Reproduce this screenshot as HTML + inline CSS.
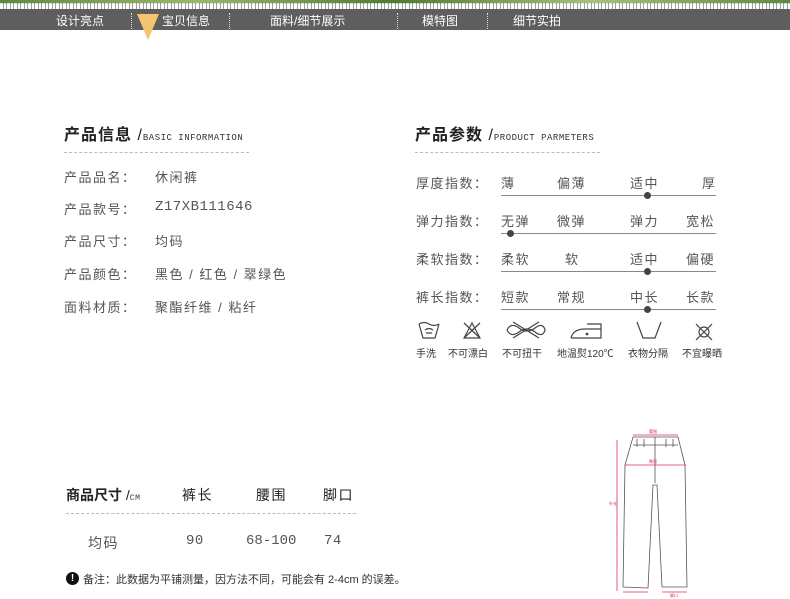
<!DOCTYPE html>
<html><head><meta charset="utf-8"><style>
*{margin:0;padding:0;box-sizing:border-box}
body{width:790px;height:599px;background:#fff;position:relative;overflow:hidden;font-family:"Liberation Sans","Noto Sans CJK SC",sans-serif;color:#444}
.a{position:absolute;white-space:nowrap}
.t{font-size:13px;color:#555;letter-spacing:1.5px}
.h{font-size:16px;color:#222;font-weight:bold;letter-spacing:1px}
.e{font-size:9px;color:#333;font-family:"Liberation Mono",monospace;letter-spacing:0.5px;font-weight:normal}
.dl{position:absolute;height:0;border-top:1px dashed #bbb}
.nav{color:#fff;font-size:12px}
.ln{position:absolute;height:1px;background:#888}
.dot{position:absolute;width:7px;height:7px;border-radius:50%;background:#444}
.ic{font-size:10px;color:#333}
.m{font-family:"Liberation Mono",monospace;letter-spacing:0.5px}
</style></head><body>
<div class="a" style="left:0;top:0;width:790px;height:4px;background:linear-gradient(90deg,#5d8a3a,#9ab86a,#4f7a32,#a8c07a,#5d8a3a)"></div>
<div class="a" style="left:0;top:3px;width:790px;height:6px;background:repeating-linear-gradient(90deg,#fff 0 3px,#888 3px 4px,#fff 4px 6px,#888 6px 7px);opacity:.8"></div>
<div class="a" style="left:0;top:9px;width:790px;height:21px;background:#5e5e5e"></div>
<div class="a nav" style="left:56px;top:12px">设计亮点</div>
<div class="a nav" style="left:162px;top:12px">宝贝信息</div>
<div class="a nav" style="left:270px;top:12px">面料/细节展示</div>
<div class="a nav" style="left:422px;top:12px">模特图</div>
<div class="a nav" style="left:513px;top:12px">细节实拍</div>
<div class="a" style="left:131px;top:13px;height:16px;border-left:1px dotted #ddd"></div>
<div class="a" style="left:229px;top:13px;height:16px;border-left:1px dotted #ddd"></div>
<div class="a" style="left:397px;top:13px;height:16px;border-left:1px dotted #ddd"></div>
<div class="a" style="left:487px;top:13px;height:16px;border-left:1px dotted #ddd"></div>
<div class="a" style="left:137px;top:14px;width:0;height:0;border-left:11px solid transparent;border-right:11px solid transparent;border-top:26px solid #f5c46e"></div>

<div class="a h" style="left:64px;top:121px">产品信息 <span style="font-weight:normal">/</span><span class="e">BASIC INFORMATION</span></div>
<div class="dl" style="left:64px;top:152px;width:185px"></div>
<div class="a t" style="left:64px;top:167px">产品品名：</div><div class="a t" style="left:155px;top:167px">休闲裤</div>
<div class="a t" style="left:64px;top:199px">产品款号：</div><div class="a t m" style="left:155px;top:199px;font-size:14px">Z17XB111646</div>
<div class="a t" style="left:64px;top:231px">产品尺寸：</div><div class="a t" style="left:155px;top:231px">均码</div>
<div class="a t" style="left:64px;top:264px">产品颜色：</div><div class="a t" style="left:155px;top:264px">黑色 / 红色 / 翠绿色</div>
<div class="a t" style="left:64px;top:297px">面料材质：</div><div class="a t" style="left:155px;top:297px">聚酯纤维 / 粘纤</div>

<div class="a h" style="left:415px;top:121px">产品参数 <span style="font-weight:normal">/</span><span class="e">PRODUCT PARMETERS</span></div>
<div class="dl" style="left:415px;top:152px;width:185px"></div>

<div class="a t" style="left:416px;top:173px">厚度指数：</div>
<div class="a t" style="left:501px;top:173px">薄</div><div class="a t" style="left:557px;top:173px">偏薄</div><div class="a t" style="left:630px;top:173px">适中</div><div class="a t" style="left:702px;top:173px">厚</div>
<div class="ln" style="left:501px;top:195px;width:215px"></div><div class="dot" style="left:644px;top:192px"></div>

<div class="a t" style="left:416px;top:211px">弹力指数：</div>
<div class="a t" style="left:501px;top:211px">无弹</div><div class="a t" style="left:557px;top:211px">微弹</div><div class="a t" style="left:630px;top:211px">弹力</div><div class="a t" style="left:686px;top:211px">宽松</div>
<div class="ln" style="left:501px;top:233px;width:215px"></div><div class="dot" style="left:507px;top:230px"></div>

<div class="a t" style="left:416px;top:249px">柔软指数：</div>
<div class="a t" style="left:501px;top:249px">柔软</div><div class="a t" style="left:565px;top:249px">软</div><div class="a t" style="left:630px;top:249px">适中</div><div class="a t" style="left:686px;top:249px">偏硬</div>
<div class="ln" style="left:501px;top:271px;width:215px"></div><div class="dot" style="left:644px;top:268px"></div>

<div class="a t" style="left:416px;top:287px">裤长指数：</div>
<div class="a t" style="left:501px;top:287px">短款</div><div class="a t" style="left:557px;top:287px">常规</div><div class="a t" style="left:630px;top:287px">中长</div><div class="a t" style="left:686px;top:287px">长款</div>
<div class="ln" style="left:501px;top:309px;width:215px"></div><div class="dot" style="left:644px;top:306px"></div>

<svg class="a" style="left:415px;top:318px" width="320" height="28" fill="none" stroke="#444" stroke-width="1.2">
<path d="M4 6 L8 20 H20 L24 6 M4 6 Q9 3 14 6 Q19 9 24 6"/><path d="M10 12 Q14 9 18 12 M11 15 H17"/>
<path d="M49 20 L57 5 L65 20 Z M49 5 L65 20 M65 5 L49 20"/>
<path d="M92 12 Q96 4 104 10 Q112 16 120 10 Q128 4 130 12 Q128 20 120 14 Q112 8 104 14 Q96 20 92 12 Z M98 4 L124 20 M124 4 L98 20"/>
<path d="M156 20 H186 V6 H172 M156 20 Q158 11 170 11 H186"/><circle cx="172" cy="16" r="0.8" fill="#444"/>
<path d="M222 4 L228 20 H240 L246 4"/>
<path d="M281 6 L297 22 M297 6 L281 22"/><circle cx="289" cy="14" r="5"/>
</svg>
<div class="a ic" style="left:416px;top:345px">手洗</div>
<div class="a ic" style="left:448px;top:345px">不可漂白</div>
<div class="a ic" style="left:502px;top:345px">不可扭干</div>
<div class="a ic" style="left:557px;top:345px">地温熨120℃</div>
<div class="a ic" style="left:628px;top:345px">衣物分隔</div>
<div class="a ic" style="left:682px;top:345px">不宜曝晒</div>

<div class="a h" style="left:66px;top:485px;font-size:14px;letter-spacing:0">商品尺寸 <span style="font-weight:normal">/</span><span class="e" style="font-size:8px">CM</span></div>
<div class="a t" style="left:182px;top:485px;font-size:14px;color:#222">裤长</div>
<div class="a t" style="left:256px;top:485px;font-size:14px;color:#222">腰围</div>
<div class="a t" style="left:323px;top:485px;font-size:14px;color:#222">脚口</div>
<div class="dl" style="left:66px;top:513px;width:290px"></div>
<div class="a t" style="left:88px;top:533px;font-size:14px">均码</div>
<div class="a t m" style="left:186px;top:533px;font-size:14px">90</div>
<div class="a t m" style="left:246px;top:533px;font-size:14px;letter-spacing:0">68-100</div>
<div class="a t m" style="left:324px;top:533px;font-size:14px">74</div>
<div class="a" style="left:66px;top:572px;width:13px;height:13px;border-radius:50%;background:#111;color:#fff;font-size:10px;font-weight:bold;text-align:center;line-height:13px">!</div>
<div class="a" style="left:83px;top:571px;font-size:11px;color:#333">备注：此数据为平铺测量，因方法不同，可能会有 2-4cm 的误差。</div>

<svg class="a" style="left:590px;top:425px" width="120" height="174" fill="none" stroke="#555" stroke-width="0.8">
<path d="M43 12 L35 40 L33 162 L58 163 L63 60 L67 60 L72 162 L97 162 L95 40 L88 12 Z"/>
<path d="M65 12 L65 58 M43 20 H88 M47 14 V22 M54 14 V22 M76 14 V22 M83 14 V22"/>
<g stroke="#e0305a"><path d="M43 10 H88 M35 40 H96 M27 15 V166 M33 167 H58 M72 167 H97"/></g>
<g fill="#e0305a" stroke="none" font-size="4"><text x="59" y="8">腰围</text><text x="59" y="38">臀围</text><text x="19" y="80">外长</text><text x="80" y="172">脚口</text></g>
</svg>
</body></html>
